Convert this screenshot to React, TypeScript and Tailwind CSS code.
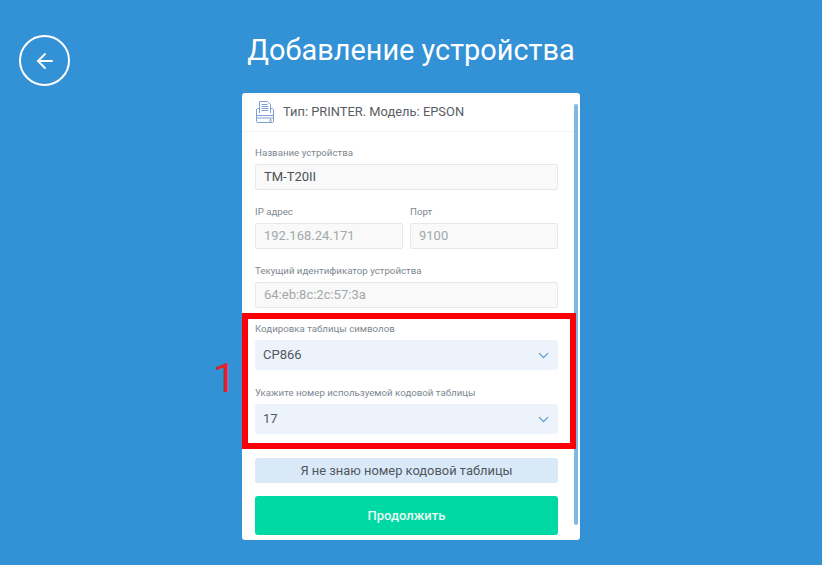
import { ArrowLeft, ChevronDown } from "lucide-react";

function Field({
  label,
  value,
  muted,
  className,
}: {
  label: string;
  value: string;
  muted?: boolean;
  className?: string;
}) {
  return (
    <div className={className}>
      <div className="h-[16px] text-[9.7px] leading-[16px] text-[#7d8790]">{label}</div>
      <div
        className={`mt-[3px] flex h-[26px] items-center rounded-[2px] border border-[#e6e9e6] bg-[#f8f9f8] px-[8px] text-[13px] ${
          muted ? "text-[#a3a8ac]" : "text-[#4c5257]"
        }`}
      >
        {value}
      </div>
    </div>
  );
}

function SelectField({ label, value }: { label: string; value: string }) {
  return (
    <div>
      <div className="h-[16px] text-[9.7px] leading-[16px] text-[#7d8790]">{label}</div>
      <div className="mt-[3px] flex h-[30px] items-center justify-between rounded-[3px] bg-[#edf3fa] pl-[8px] pr-[6px] text-[13px] text-[#50575e]">
        <span>{value}</span>
        <ChevronDown className="h-[17px] w-[17px] text-[#4a90c8]" strokeWidth={1.5} />
      </div>
    </div>
  );
}

function PrinterIcon() {
  return (
    <svg width="20" height="24" viewBox="0 0 20 24" fill="none" stroke="#7f9fce" strokeWidth="1">
      <path d="M4.5 13V1.5h8l3 3V13" />
      <path d="M6.5 4.5h6M6.5 6.5h7M6.5 8.5h7M6.5 10.5h7" />
      <path d="M4.5 8.5H2.5a1.500 1.500 0 0 0-1 1.500V21.500a1 1 0 0 0 1 1h15a1 1 0 0 0 1-1V10a1.500 1.500 0 0 0-1-1.500h-2" />
      <path d="M1.500 15.500h17M1.500 18h17" />
      <circle cx="15.500" cy="20.500" r="1" />
    </svg>
  );
}

export default function App() {
  return (
    <div className="relative h-[565px] w-[822px] overflow-hidden bg-[#3391d5] font-['Roboto',sans-serif]">
      <button className="absolute left-[19px] top-[35px] flex h-[51px] w-[51px] items-center justify-center rounded-full border-2 border-white text-white">
        <ArrowLeft className="h-[24px] w-[24px]" strokeWidth={1.8} />
      </button>

      <div className="flex flex-col items-center">
        <h1 className="mt-[33px] h-[60px] text-[28.9px] leading-[34px] text-white">
          Добавление устройства
        </h1>

        <div className="relative h-[447px] w-[338px] rounded-[3px] bg-white">
          <div className="flex h-[39px] items-center gap-[8px] border-b border-[#f4f5f6] pl-[13px] text-[12.9px] text-[#585e63]">
            <PrinterIcon />
            <span>Тип: PRINTER. Модель: EPSON</span>
          </div>

          <div className="mt-[13px] flex w-[316px] flex-col pl-[13px]">
            <Field label="Название устройства" value="TM-T20II" />
            <div className="mt-[14px] flex gap-[7px]">
              <Field className="w-[148px]" label="IP адрес" value="192.168.24.171" muted />
              <Field className="w-[148px]" label="Порт" value="9100" muted />
            </div>
            <Field className="mt-[14px]" label="Текущий идентификатор устройства" value="64:eb:8c:2c:57:3a" muted />

            <div className="mt-[13px] flex flex-col gap-[15px]">
              <SelectField label="Кодировка таблицы символов" value="CP866" />
              <SelectField label="Укажите номер используемой кодовой таблицы" value="17" />
            </div>

            <button className="mt-[24px] h-[25px] rounded-[3px] bg-[#d9e9f8] text-[12.9px] text-[#50575e]">
              Я не знаю номер кодовой таблицы
            </button>
            <button className="mt-[13px] h-[39px] rounded-[3px] bg-[#00d9a3] text-[13px] font-medium text-[#e8fbf5]">
              Продолжить
            </button>
          </div>

          <div className="absolute right-[2px] top-[11px] h-[421px] w-[4px] rounded-full bg-[#7db8e6]" />
        </div>
      </div>

      <div className="absolute left-[242px] top-[313px] h-[136px] w-[334px] border-[6px] border-[#fb0007]" />
      <div className="absolute left-[213px] top-[354px] text-[41px] leading-[48px] text-[#e2232a]">1</div>
    </div>
  );
}
